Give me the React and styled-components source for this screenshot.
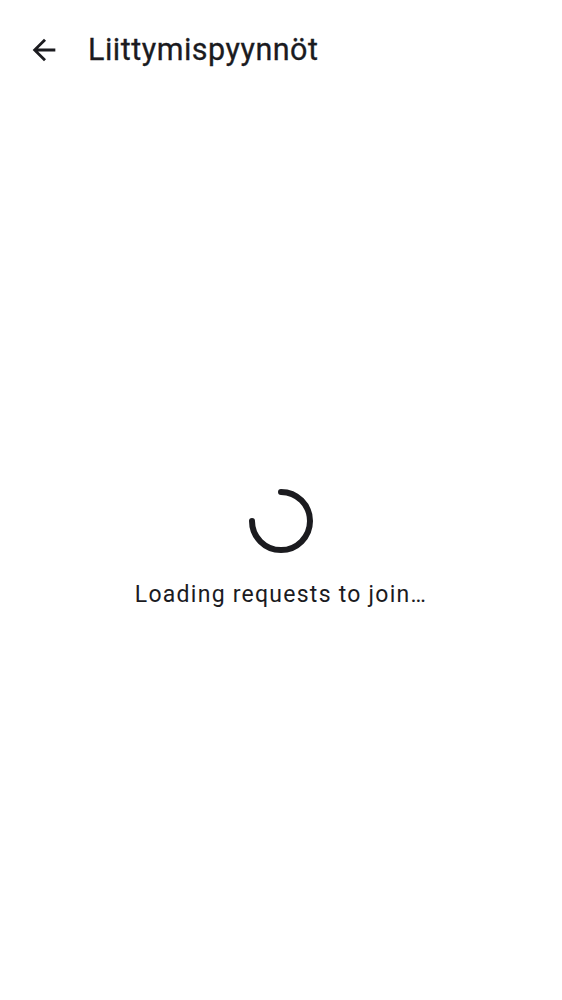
import React from 'react';
import styled, { createGlobalStyle } from 'styled-components';

const GlobalStyle = createGlobalStyle`
  html, body {
    margin: 0;
    padding: 0;
    background: #ffffff;
  }
  body {
    font-family: Roboto, "Noto Sans", sans-serif;
    color: #1b1b1f;
  }
`;

const Screen = styled.div`
  display: flex;
  flex-direction: column;
  width: 562px;
  height: 1000px;
  background: #fff;
`;

const TopBar = styled.header`
  display: flex;
  align-items: center;
  height: 100px;
  padding-left: 26px;
  box-sizing: border-box;
`;

const BackButton = styled.button`
  display: flex;
  align-items: center;
  justify-content: center;
  width: 36px;
  height: 36px;
  padding: 0;
  border: none;
  background: none;
  color: #1b1b1f;
  cursor: pointer;
`;

const Title = styled.h1`
  margin: 0 0 0 26px;
  font-size: 30.5px;
  font-weight: 400;
  letter-spacing: 0.5px;
  line-height: 1;
  color: #1b1b1f;
  -webkit-text-stroke: 0.3px #1b1b1f;
`;

const Body = styled.main`
  flex: 1;
  display: flex;
  flex-direction: column;
  align-items: center;
  padding-top: 388px;
`;

const Spinner = styled.svg`
  width: 66px;
  height: 66px;
`;

const Message = styled.p`
  margin: 27px 0 0;
  font-size: 23px;
  letter-spacing: 1.25px;
  color: #1b1b1f;
`;

function App() {
  return (
    <>
      <GlobalStyle />
      <Screen>
        <TopBar>
          <BackButton aria-label="Back">
            <svg width="34" height="34" viewBox="0 0 24 24">
              <path fill="currentColor" d="M20 11H7.83l5.59-5.59L12 4l-8 8 8 8 1.41-1.41L7.83 13H20v-2z" />
            </svg>
          </BackButton>
          <Title>Liittymispyynnöt</Title>
        </TopBar>
        <Body>
          <Spinner viewBox="0 0 66 66">
            <path
              d="M33 4 A29 29 0 1 1 4 33"
              fill="none"
              stroke="#1b1b1f"
              strokeWidth="6"
              strokeLinecap="round"
            />
          </Spinner>
          <Message>Loading requests to join…</Message>
        </Body>
      </Screen>
    </>
  );
}

export default App;
